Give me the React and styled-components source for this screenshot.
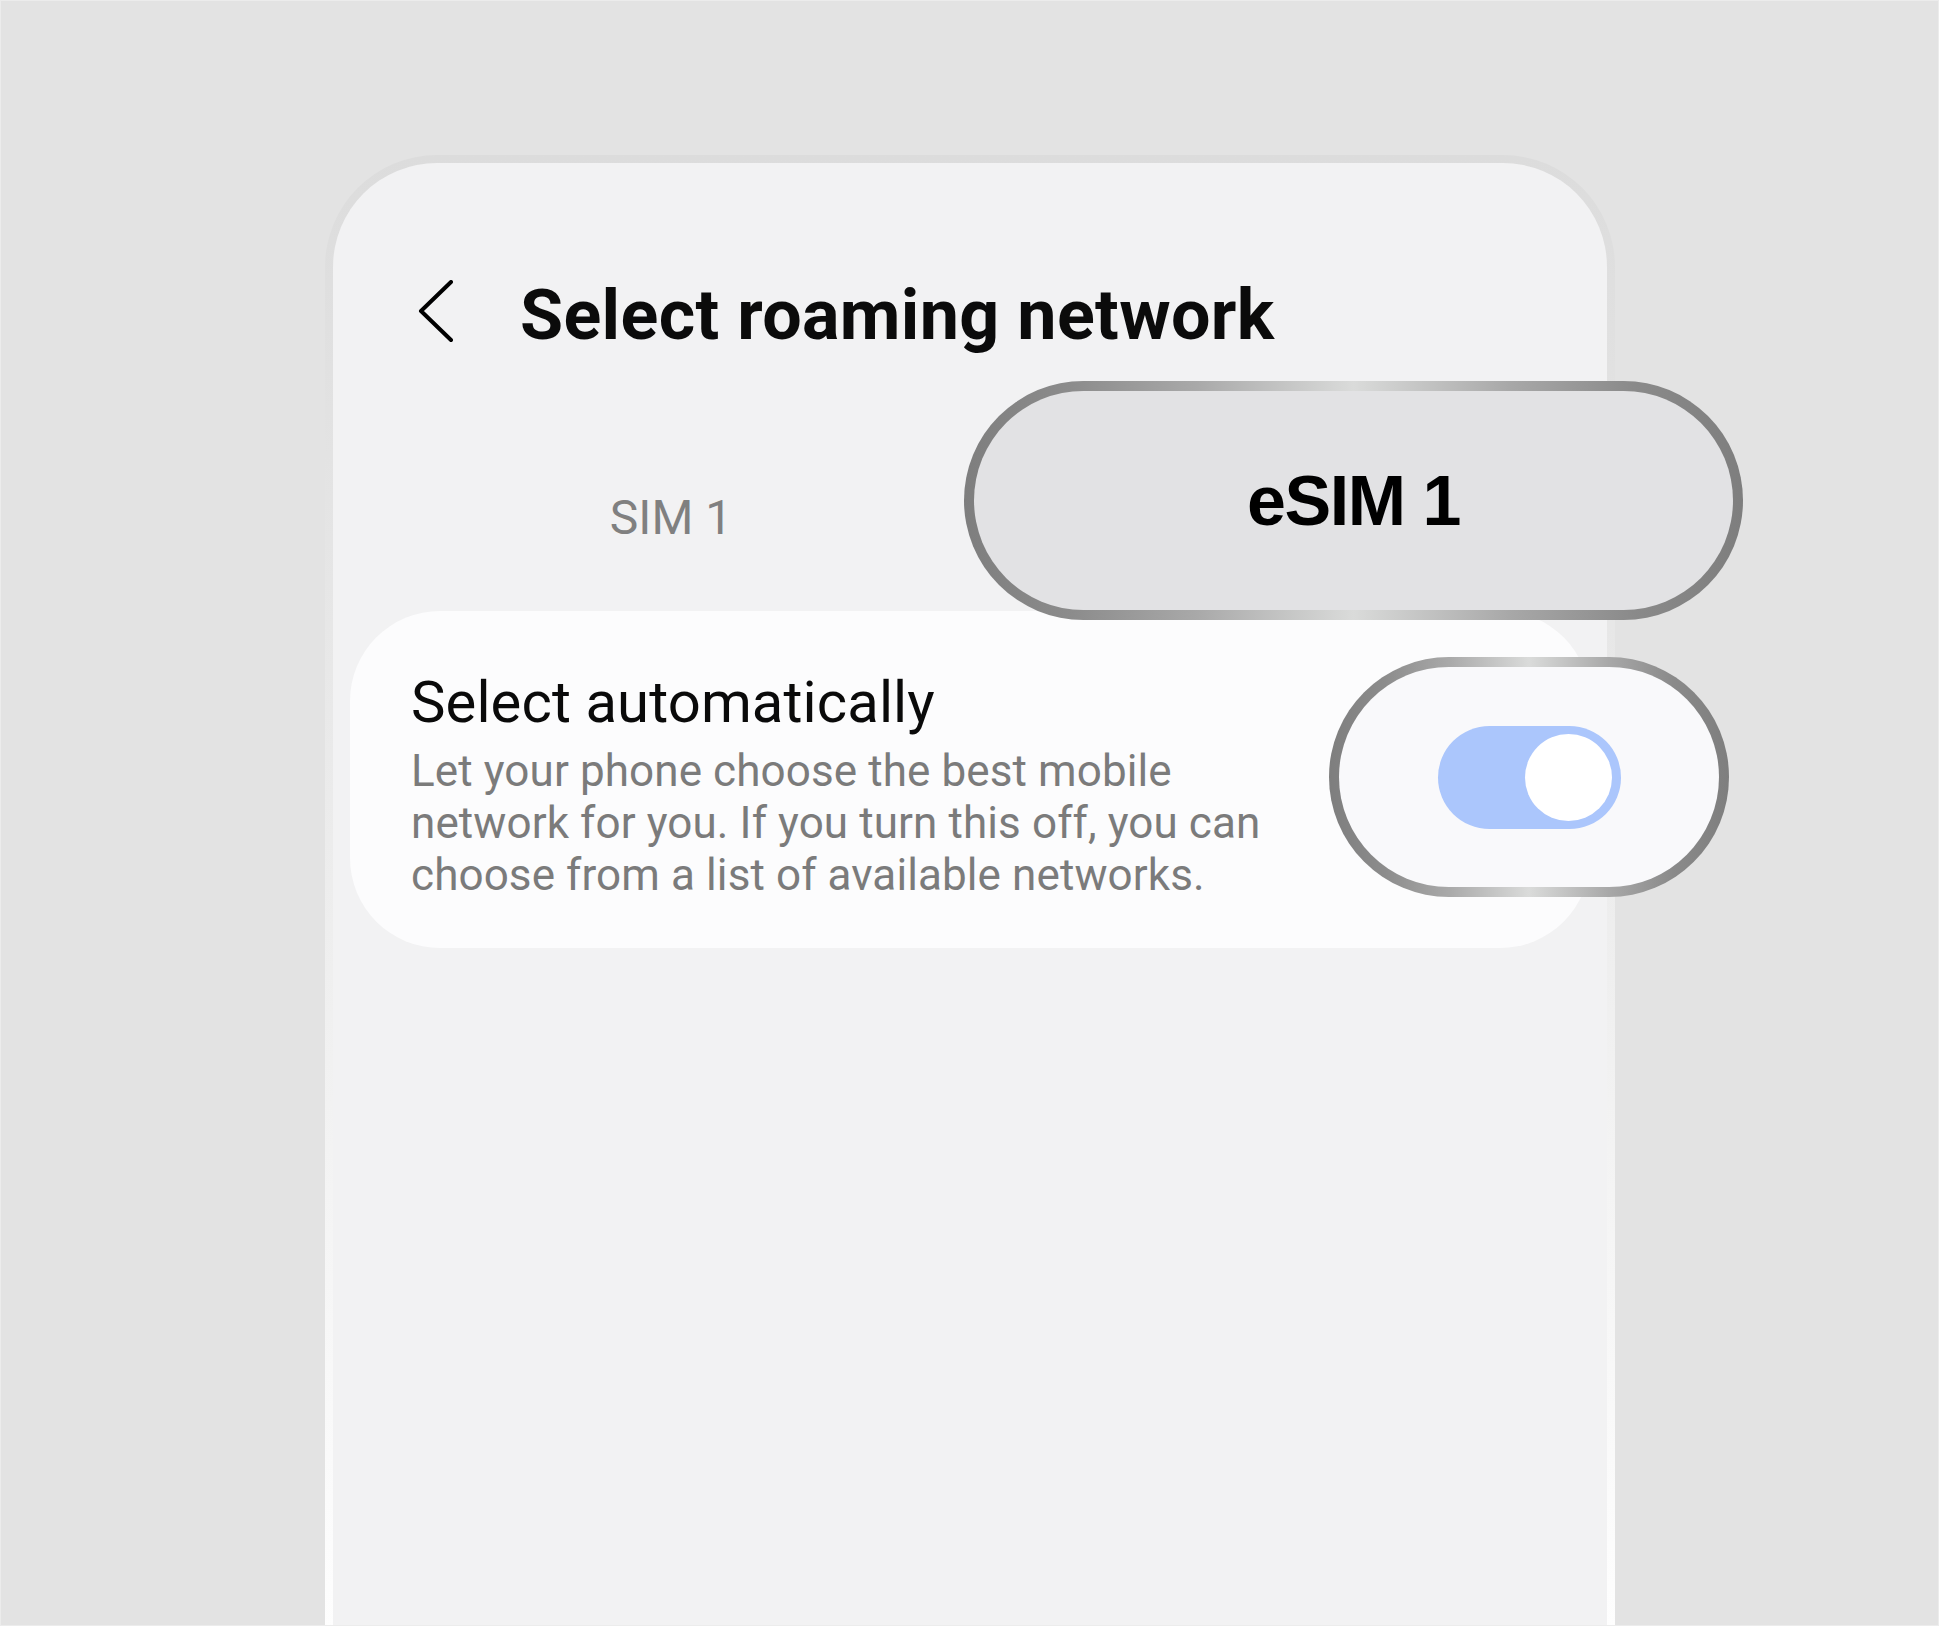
import React from "react"
import styled, { createGlobalStyle } from "styled-components"

const GlobalStyle = createGlobalStyle`
    html, body {
        margin: 0;
        padding: 0;
        background: #e3e3e3;
        overflow: hidden;
    }
    * {
        box-sizing: border-box;
    }
`

const chrome = `linear-gradient(90deg, #7e7e7e 0%, #8c8c8c 14%, #a9a9a9 30%, #dadbda 50%, #a8a8a8 70%, #8a8a8a 86%, #7e7e7e 100%)`

const Page = styled.div`
    width: 100vw;
    height: 100vh;
    border: 1px solid #ececec;
    padding: 154px 0 0 324px;
    overflow: hidden;
`

const Phone = styled.div`
    width: 1290px;
    height: 1520px;
    padding: 8px 8px 0;
    border-radius: 112px 112px 0 0;
    background: linear-gradient(180deg, #dcdcdc 0%, #ececec 45%, #ffffff 100%);
`

const Screen = styled.div`
    height: 100%;
    border-radius: 104px 104px 0 0;
    background: #f2f2f3;
    padding: 117px 17px 0;
`

const Header = styled.div`
    display: flex;
    align-items: center;
    gap: 64px;
    height: 70px;
    padding-left: 66px;
`

const Title = styled.h1`
    margin: 0;
    font-family: Roboto, "Noto Sans", sans-serif;
    font-weight: 700;
    font-size: 70px;
    line-height: 70px;
    letter-spacing: 0.35px;
    color: #0b0b0b;
`

const Tabs = styled.div`
    display: grid;
    grid-template-columns: 642px 1fr;
    height: 110px;
    margin-top: 113px;
`

const Tab = styled.div`
    position: relative;
    z-index: ${props => props.active ? 2 : 0};
    display: flex;
    align-items: center;
    justify-content: center;
    font-family: Roboto, "Noto Sans", sans-serif;
    font-size: 48px;
    line-height: 48px;
    color: ${props => props.active ? "#000" : "#808080"};
`

// magnified highlight laid over the selected tab
const TabCallout = styled.div`
    position: absolute;
    left: -28px;
    top: -82px;
    width: 779px;
    height: 239px;
    display: flex;
    align-items: center;
    justify-content: center;
    border: 10px solid transparent;
    border-radius: 120px;
    background: linear-gradient(#e2e2e4, #e2e2e4) padding-box, ${chrome} border-box;
    font-family: "Liberation Sans", Arial, sans-serif;
    font-weight: 700;
    font-size: 70px;
    line-height: 70px;
    letter-spacing: -1.5px;
    color: #000;
`

const Card = styled.div`
    position: relative;
    z-index: 1;
    height: 337px;
    margin-top: 38px;
    padding: 58px 0 0 61px;
    border-radius: 90px;
    background: #fcfcfd;
`

const ItemTitle = styled.div`
    font-family: Roboto, "Noto Sans", sans-serif;
    font-size: 58px;
    line-height: 66px;
    letter-spacing: 0.1px;
    color: #0a0a0a;
`

const ItemText = styled.div`
    margin-top: 10px;
    font-family: Roboto, "Noto Sans", sans-serif;
    font-size: 44px;
    line-height: 52px;
    letter-spacing: 0.1px;
    color: #7b7b7b;
    white-space: nowrap;
`

const SwitchCallout = styled.div`
    position: absolute;
    left: 979px;
    top: 46px;
    width: 400px;
    height: 240px;
    display: flex;
    align-items: center;
    justify-content: center;
    border: 10px solid transparent;
    border-radius: 120px;
    background: linear-gradient(#f9f9fb, #f9f9fb) padding-box, ${chrome} border-box;
`

const Track = styled.div`
    display: flex;
    align-items: center;
    justify-content: ${props => props.on ? "flex-end" : "flex-start"};
    width: 183px;
    height: 103px;
    padding: 0 9px;
    border-radius: 52px;
    background: ${props => props.on ? "#abc6fc" : "#c9c9cc"};
`

const Thumb = styled.div`
    width: 87px;
    height: 87px;
    border-radius: 50%;
    background: #ffffff;
`

const BackIcon = () => (
    <svg width="40" height="70" viewBox="0 0 40 70" fill="none">
        <path d="M35 2 L5 31 L35 60" stroke="#000" strokeWidth="4" strokeLinecap="round" strokeLinejoin="round" />
    </svg>
)

const App = () => {
    return (
        <>
            <GlobalStyle />
            <Page>
                <Phone>
                    <Screen>
                        <Header>
                            <BackIcon />
                            <Title>Select roaming network</Title>
                        </Header>
                        <Tabs>
                            <Tab>SIM 1</Tab>
                            <Tab active>
                                <TabCallout>eSIM 1</TabCallout>
                            </Tab>
                        </Tabs>
                        <Card>
                            <ItemTitle>Select automatically</ItemTitle>
                            <ItemText>
                                Let your phone choose the best mobile<br />
                                network for you. If you turn this off, you can<br />
                                choose from a list of available networks.
                            </ItemText>
                            <SwitchCallout>
                                <Track on>
                                    <Thumb />
                                </Track>
                            </SwitchCallout>
                        </Card>
                    </Screen>
                </Phone>
            </Page>
        </>
    )
}

export default App
